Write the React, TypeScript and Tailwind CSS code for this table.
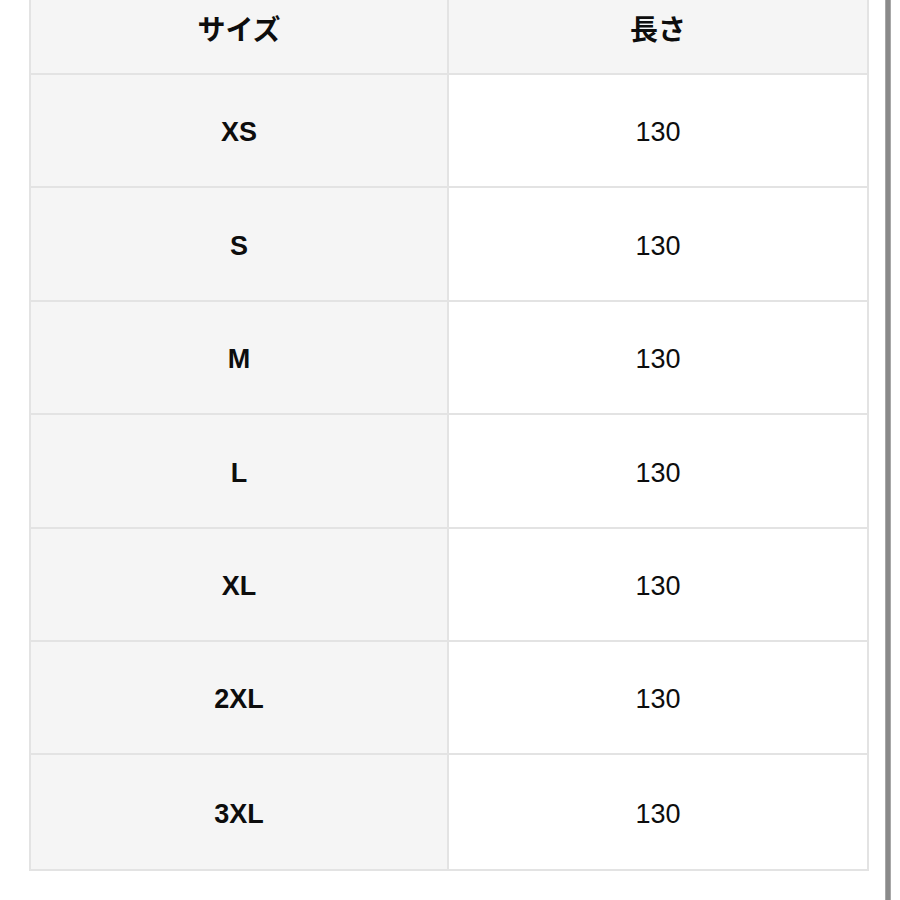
const sizes = ["XS", "S", "M", "L", "XL", "2XL", "3XL"];

const App = () => {
  return (
    <div
      className="w-[900px] h-[900px] bg-white flex overflow-hidden text-[#0d0d0d]"
      style={{ fontFamily: '"Liberation Sans", "Noto Sans CJK JP", sans-serif' }}
    >
      {/* Size table */}
      <div className="ml-[29px] w-[840px] self-start border-x-2 border-b-2 border-[#e3e3e3] grid grid-cols-2">
        {/* Header */}
        <div className="h-[75px] bg-[#f5f5f5] border-r-2 border-b-2 border-[#e3e3e3] flex items-center justify-center pb-[12px] text-[28px] font-bold">
          サイズ
        </div>
        <div className="h-[75px] bg-[#f5f5f5] border-b-2 border-[#e3e3e3] flex items-center justify-center pb-[12px] text-[28px] font-bold">
          長さ
        </div>

        {/* Rows */}
        {sizes.map((size, index) => (
          <div key={size} className="contents">
            <div
              className={`h-[113.4px] bg-[#f5f5f5] border-r-2 border-[#e3e3e3] flex items-center justify-center pt-[4px] text-[27px] font-bold ${
                index < sizes.length - 1 ? "border-b-2" : ""
              }`}
            >
              {size}
            </div>
            <div
              className={`h-[113.4px] bg-white border-[#e3e3e3] flex items-center justify-center pt-[4px] text-[27px] ${
                index < sizes.length - 1 ? "border-b-2" : ""
              }`}
            >
              130
            </div>
          </div>
        ))}
      </div>

      {/* Side bar */}
      <div className="ml-[16px] w-[6px] h-full bg-[#8a8a8a] border-x border-[#a8a8a8]" />
    </div>
  );
};

export default App;
